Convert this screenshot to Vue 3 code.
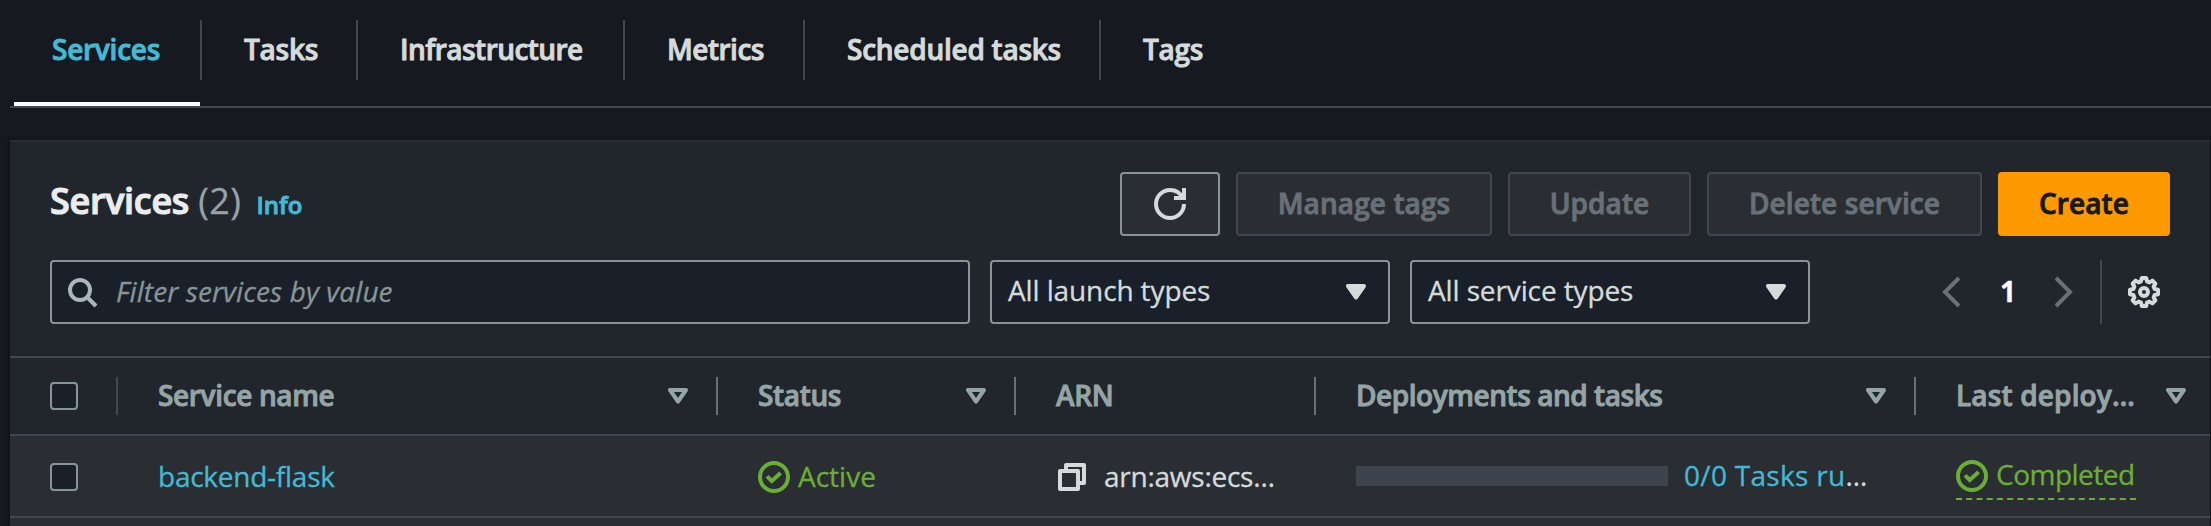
<script setup>
const tabs = ['Services', 'Tasks', 'Infrastructure', 'Metrics', 'Scheduled tasks', 'Tags']
const actions = ['Manage tags', 'Update', 'Delete service']
const filters = ['All launch types', 'All service types']
const columns = [
  { label: 'Service name', sortable: true },
  { label: 'Status', sortable: true },
  { label: 'ARN', sortable: false },
  { label: 'Deployments and tasks', sortable: true },
  { label: 'Last deploy…', sortable: true },
]
</script>

<template>
  <div class="page">
    <nav class="tabs">
      <a v-for="(t, i) in tabs" :key="t" class="tab" :class="{ active: i === 0 }"><span>{{ t }}</span></a>
    </nav>

    <section class="panel">
      <header class="head">
        <h2>Services <span class="count">(2)</span></h2>
        <a class="info">Info</a>
        <div class="actions">
          <button class="btn refresh" aria-label="Refresh">
            <svg width="32" height="32" viewBox="0 0 16 16" fill="none" stroke="currentColor" stroke-width="2">
              <path d="M15 8c0 3.870-3.130 7-7 7s-7-3.130-7-7 3.130-7 7-7c2.790 0 5.200 1.630 6.330 4" />
              <path d="M10 5h5V0" />
            </svg>
          </button>
          <button v-for="a in actions" :key="a" class="btn disabled">{{ a }}</button>
          <button class="btn primary">Create</button>
        </div>
      </header>

      <div class="filters">
        <div class="search">
          <svg width="32" height="32" viewBox="0 0 16 16" fill="none" stroke="currentColor" stroke-width="2">
            <circle cx="7" cy="7" r="5" />
            <path d="m15 15-4.500-4.500" />
          </svg>
          <span>Filter services by value</span>
        </div>
        <div v-for="f in filters" :key="f" class="select">
          <span>{{ f }}</span>
          <svg width="20" height="16" viewBox="0 0 20 16"><path d="M2 2h16l-8 11.500z" fill="currentColor" stroke="currentColor" stroke-width="4" stroke-linejoin="round" /></svg>
        </div>
        <div class="pager">
          <svg width="32" height="32" viewBox="0 0 16 16" fill="none" stroke="currentColor" stroke-width="2"><path d="M12 1 5 8l7 7" /></svg>
          <b>1</b>
          <svg width="32" height="32" viewBox="0 0 16 16" fill="none" stroke="currentColor" stroke-width="2"><path d="m4 1 7 7-7 7" /></svg>
        </div>
        <div class="prefs">
          <svg width="32" height="32" viewBox="0 0 16 16" fill="none" stroke="currentColor" stroke-width="2" stroke-linejoin="round">
            <path d="M15 9.100V6.900l-1.700-.4-.5-1.200.9-1.500-1.500-1.500-1.500.9-1.200-.5L9.100 1H6.900l-.4 1.700-1.200.5-1.500-.9-1.500 1.500.9 1.500-.5 1.200L1 6.900v2.200l1.700.4.5 1.200-.9 1.500 1.500 1.500 1.500-.9 1.200.5.4 1.700h2.200l.4-1.700 1.200-.5 1.500.9 1.500-1.500-.9-1.500.5-1.200z" />
            <circle cx="8" cy="8" r="2" />
          </svg>
        </div>
      </div>

      <div class="grid thead">
        <div class="pick"><i class="box"></i></div>
        <div v-for="c in columns" :key="c.label" class="th">
          <span>{{ c.label }}</span>
          <svg v-if="c.sortable" width="20" height="16" viewBox="0 0 20 16"><path d="M2 2h16l-8 11.500z" fill="none" stroke="currentColor" stroke-width="4" stroke-linejoin="round" /></svg>
        </div>
      </div>

      <div class="grid row">
        <div class="pick"><i class="box"></i></div>
        <div class="td link name"><span>backend-flask</span></div>
        <div class="td ok">
          <svg width="32" height="32" viewBox="0 0 16 16" fill="none" stroke="currentColor" stroke-width="2"><circle cx="8" cy="8" r="7" /><path d="m4.500 7.700 2.400 2.300 4.400-4" /></svg>
          <span class="state">Active</span>
        </div>
        <div class="td arn">
          <svg width="32" height="32" viewBox="0 0 16 16" fill="none" stroke="currentColor" stroke-width="2" stroke-linejoin="round"><path d="M2 5h9v9H2z" /><path d="M5 5V2h9v9h-3" /></svg>
          <span>arn:aws:ecs…</span>
        </div>
        <div class="td deploy"><i class="bar"></i><span><span class="link">0/0 Tasks ru</span>…</span></div>
        <div class="td">
          <span class="ok done">
            <svg width="32" height="32" viewBox="0 0 16 16" fill="none" stroke="currentColor" stroke-width="2"><circle cx="8" cy="8" r="7" /><path d="m4.500 7.700 2.400 2.300 4.400-4" /></svg>
            <span>Completed</span>
          </span>
        </div>
      </div>
      <div class="next"></div>
    </section>
  </div>
</template>

<style>
body {
  background: #16191f;
}
</style>

<style scoped>
.page {
  box-sizing: border-box;
  height: 526px;
  overflow: hidden;
  padding: 0 1px 0 10px;
  background: #161920;
  color: #d5dbdb;
  font: 400 28px/38px "Open Sans", "Noto Sans", sans-serif;
  white-space: nowrap;
  -webkit-text-stroke: 0.3px currentColor;
}
svg {
  display: block;
  flex: none;
}
.tabs,
.thead,
.btn,
.info {
  -webkit-text-stroke: 0.9px currentColor;
}
.tabs {
  display: grid;
  grid-template-columns: 188px 156px 267px 180px 296px 200px;
  height: 106px;
  padding-left: 4px;
  margin-right: -1px;
  border-bottom: 2px solid #414750;
  font-weight: 600;
  letter-spacing: -0.25px;
}
.tab {
  box-sizing: border-box;
  display: flex;
  flex-direction: column;
  padding-top: 20px;
}
.tab span {
  box-sizing: border-box;
  height: 60px;
  padding: 10px 0 0 42px;
  border-right: 2px solid #414750;
}
.tab:nth-child(3) {
  letter-spacing: -0.55px;
}
.tab:nth-child(4) {
  letter-spacing: -0.5px;
}
.tab:last-child span {
  border: 0;
}
.tab.active {
  color: #44b9d6;
}
.tab.active span {
  padding-left: 38px;
}
.tab.active::after {
  content: "";
  height: 4px;
  margin: 22px 2px 0 0;
  background: #fafafa;
}
.panel {
  box-sizing: border-box;
  height: 400px;
  margin-top: 32px;
  border-top: 2px solid #2a2e33;
  background: #21252c;
  box-shadow: 0 2px 4px 1px rgba(0, 0, 0, 0.5);
}
.head {
  display: flex;
  align-items: center;
  height: 64px;
  padding: 30px 40px 0;
}
h2 {
  margin: 0;
  padding-bottom: 6px;
  font-size: 36px;
  line-height: 48px;
  font-weight: 600;
  letter-spacing: -0.3px;
  color: #eaeded;
  -webkit-text-stroke: 1.1px currentColor;
}
.count {
  font-weight: 400;
  letter-spacing: 0.5px;
  color: #95a5a6;
  -webkit-text-stroke: 0.3px currentColor;
}
.info {
  margin-left: 15px;
  padding-top: 1px;
  font-size: 24px;
  font-weight: 600;
  color: #44b9d6;
}
.actions {
  display: flex;
  gap: 16px;
  margin-left: auto;
}
.btn {
  box-sizing: border-box;
  height: 64px;
  padding: 0 0 2px;
  border: 2px solid #414750;
  border-radius: 4px;
  background: #2a2e33;
  color: #687078;
  font: inherit;
  font-weight: 600;
  letter-spacing: 0.1px;
}
.btn:nth-child(2) {
  width: 256px;
}
.btn:nth-child(3) {
  width: 183px;
}
.btn:nth-child(4) {
  width: 275px;
}
.refresh {
  display: flex;
  align-items: center;
  justify-content: center;
  width: 100px;
  padding: 0;
  border-color: #879596;
  color: #d5dbdb;
}
.primary {
  width: 172px;
  border-color: #ff9900;
  background: #ff9900;
  color: #16191f;
}
.filters {
  display: flex;
  gap: 20px;
  height: 64px;
  padding: 24px 50px 32px 40px;
}
.search,
.select {
  box-sizing: border-box;
  display: flex;
  align-items: center;
  border: 2px solid #879596;
  border-radius: 4px;
  background: #1a2029;
}
.search {
  width: 920px;
  padding-left: 14px;
  color: #879596;
  font-style: italic;
  letter-spacing: 0.1px;
}
.search svg {
  color: #aab7b8;
}
.search span {
  padding: 0 0 3px 18px;
}
.select {
  width: 400px;
  justify-content: space-between;
  padding: 0 22px 0 16px;
  letter-spacing: -0.12px;
}
.select span {
  padding-bottom: 4px;
}
.pager {
  display: flex;
  align-items: center;
  margin-left: auto;
  color: #687078;
}
.pager b {
  width: 15px;
  padding: 0 33px 3px;
  color: #fafafa;
}
.prefs {
  display: flex;
  align-items: center;
  padding-left: 26px;
  border-left: 2px solid #414750;
}
.grid {
  display: grid;
  grid-template-columns: 108px 600px 298px 300px 600px 1fr;
  align-items: center;
}
.thead {
  height: 76px;
  border-top: 2px solid #414750;
  border-bottom: 2px solid #414750;
  color: #95a5a6;
  font-weight: 600;
  letter-spacing: -0.35px;
}
.pick {
  box-sizing: border-box;
  display: flex;
  align-items: center;
  height: 38px;
  padding-left: 40px;
}
.thead .pick {
  border-right: 2px solid #414750;
}
.box {
  box-sizing: border-box;
  width: 28px;
  height: 28px;
  border: 2px solid #879596;
  border-radius: 4px;
  background: #1a2029;
}
.th {
  box-sizing: border-box;
  display: flex;
  align-items: center;
  justify-content: space-between;
  height: 38px;
  padding: 0 28px 0 40px;
  border-right: 2px solid #687078;
}
.th span {
  padding-bottom: 3px;
}
.th:nth-child(5) {
  letter-spacing: -0.45px;
}
.th:last-child {
  padding-right: 24px;
  border: 0;
  letter-spacing: 0.15px;
}
.row {
  height: 80px;
  border-bottom: 2px solid #414750;
  background: #2a2e33;
}
.row .pick {
  padding-top: 2px;
}
.td {
  display: flex;
  align-items: center;
  padding: 2px 0 0 40px;
  letter-spacing: -0.25px;
}
.td > span:not(.done) {
  padding-bottom: 3px;
}
.link {
  color: #44b9d6;
}
.ok {
  color: #6aaf35;
}
.state {
  padding-left: 8px;
  letter-spacing: 0;
}
.arn span {
  padding-left: 16px;
}
.deploy {
  padding-top: 0;
  letter-spacing: 0.3px;
}
.deploy > span:not(.done) {
  padding-bottom: 2px;
}
.bar {
  width: 312px;
  height: 20px;
  margin-right: 16px;
  background: #3c444d;
}
.done {
  display: flex;
  align-items: center;
  box-sizing: border-box;
  width: 180px;
  height: 50px;
  padding-top: 4px;
  margin-bottom: 4px;
  gap: 8px;
  border-bottom: 2px dashed #6aaf35;
  letter-spacing: -0.5px;
}
.done span {
  padding-bottom: 4px;
}
.next {
  height: 20px;
  background: #2a2e33;
}
</style>
